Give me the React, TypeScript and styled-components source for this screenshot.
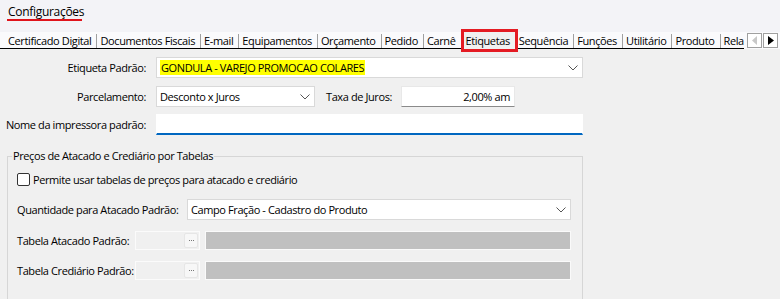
import React from "react";
import styled, { createGlobalStyle } from "styled-components";

const Global = createGlobalStyle`
  html, body { margin: 0; padding: 0; background: #f0f0f0; }
  body { font-family: "Open Sans", "Noto Sans", sans-serif; font-size: 11px; letter-spacing: -0.4px; color: #000; }
  * { box-sizing: border-box; }
`;

const Page = styled.div`
  width: 780px;
  height: 299px;
  overflow: hidden;
  background: #f0f0f0;
  display: flex;
  flex-direction: column;
  & > * { flex-shrink: 0; }
`;

const Header = styled.div`
  height: 32px;
  background: #f3f3f7;
  padding: 4px 0 0 8px;
`;

const Title = styled.span`
  display: inline-block;
  position: relative;
  font-size: 12px;
  line-height: 16px;
  letter-spacing: -0.3px;
  &::after {
    content: "";
    position: absolute;
    left: -1px;
    right: 2px;
    bottom: -1px;
    height: 2px;
    background: #e0141c;
  }
`;

const TabStrip = styled.div`
  height: 17px;
  display: flex;
  align-items: stretch;
  background: #fafafc;
`;

const Tabs = styled.div`
  flex: 1;
  min-width: 0;
  display: flex;
  border-bottom: 1px solid #000;
  padding-left: 5px;
  letter-spacing: -0.38px;
`;

const Tab = styled.div<{ $selected?: boolean; $first?: boolean; $last?: boolean }>`
  padding: 0 5px 0 3px;
  white-space: nowrap;
  border-left: ${(p) => (p.$first ? "none" : "1px solid #a0a0a0")};
  margin-top: 2px;
  height: 14px;
  line-height: 13px;
  flex-shrink: 0;
  ${(p) => (p.$last ? `flex: 1 1 auto; min-width: 0; overflow: hidden;` : "")}
  ${(p) =>
    p.$selected
      ? `outline: 3px solid #e41b23; outline-offset: 0; background:#f0f0f0; margin: 0 0 -1px 4px; height:17px; line-height:17px; border-left:none; padding: 0 5px 0 1px; position: relative; z-index: 2;`
      : ""}
`;

const Arrows = styled.div`
  display: flex;
  gap: 1px;
  padding: 1px 2px 0 3px;
`;

const ArrowBtn = styled.div`
  width: 15px;
  height: 15px;
  border: 1px solid #a0a0a0;
  background: #fff;
  display: flex;
  align-items: center;
  justify-content: center;
`;

const Content = styled.div`
  padding: 8px 0 0 0;
  display: flex;
  flex-direction: column;
`;

const Row = styled.div<{ $top?: number }>`
  display: flex;
  align-items: center;
  margin-top: ${(p) => p.$top ?? 0}px;
`;

const Label = styled.div<{ $w?: number; $left?: boolean }>`
  width: ${(p) => p.$w ?? 146}px;
  text-align: ${(p) => (p.$left ? "left" : "right")};
  white-space: nowrap;
  flex-shrink: 0;
`;

const Select = styled.div<{ $w: number; $h?: number; $ml?: number }>`
  width: ${(p) => p.$w}px;
  height: ${(p) => p.$h ?? 21}px;
  margin-left: ${(p) => p.$ml ?? 10}px;
  background: #fff;
  border: 1px solid #d9d9d9;
  display: flex;
  align-items: center;
  padding: 0 4px 0 3px;
  flex-shrink: 0;
`;

const SelectText = styled.div`
  flex: 1;
  white-space: nowrap;
  overflow: hidden;
`;

const Highlight = styled.span`
  background: #ffff00;
  padding: 2px 1px;
`;

const Input = styled.div<{ $w: number; $ml: number; $focus?: boolean }>`
  width: ${(p) => p.$w}px;
  height: 21px;
  margin-left: ${(p) => p.$ml}px;
  background: #fff;
  border: 1px solid ${(p) => (p.$focus ? "#fff" : "#e8e8e8")};
  border-bottom: ${(p) => (p.$focus ? "2px solid #0067c0" : "1px solid #8a8a8a")};
  display: flex;
  align-items: center;
  justify-content: flex-end;
  padding: 0 4px;
  flex-shrink: 0;
`;

const Group = styled.fieldset`
  margin: 14px 0 0 7px;
  width: 576px;
  border: 1px solid #d6d6d6;
  border-bottom: none;
  padding: 0 0 40px 9px;
`;

const Legend = styled.legend`
  padding: 0 1px;
  margin-left: -5px;
  line-height: 14px;
`;

const CheckRow = styled.label`
  display: flex;
  align-items: center;
  gap: 3px;
  margin-top: 9px;
`;

const Check = styled.span`
  width: 13px;
  height: 13px;
  border: 1px solid #333;
  border-radius: 2px;
  background: #fff;
`;

const Lookup = styled.div`
  width: 65px;
  height: 19px;
  border: 1px solid #fbfbfb;
  background: #f0f0f0;
  display: flex;
  justify-content: flex-end;
  align-items: center;
  padding-right: 1px;
  flex-shrink: 0;
`;

const Dots = styled.div`
  width: 14px;
  height: 15px;
  border-radius: 2px;
  background: #f7f7f7;
  border: 1px solid #e6e6e6;
  display: flex;
  align-items: center;
  justify-content: center;
  gap: 1px;
`;

const Dot = styled.span`
  width: 1px;
  height: 1px;
  background: #777;
`;

const GreyBar = styled.div`
  width: 366px;
  height: 19px;
  margin-left: 5px;
  background: #c0c0c0;
  border: 1px solid #fafafa;
  flex-shrink: 0;
`;

const Chevron = () => (
  <svg width="10" height="6" viewBox="0 0 10 6">
    <path d="M0.5 0.5 L5 5 L9.5 0.5" fill="none" stroke="#555" strokeWidth="1" />
  </svg>
);

const DotsButton = () => (
  <Dots>
    <Dot />
    <Dot />
    <Dot />
  </Dots>
);

const tabs = [
  "Certificado Digital",
  "Documentos Fiscais",
  "E-mail",
  "Equipamentos",
  "Orçamento",
  "Pedido",
  "Carnê",
  "Etiquetas",
  "Sequência",
  "Funções",
  "Utilitário",
  "Produto",
  "Rela",
];

export default function App() {
  return (
    <Page>
      <Global />
      <Header>
        <Title>Configurações</Title>
      </Header>
      <TabStrip>
        <Tabs>
          {tabs.map((t, i) => (
            <Tab
              key={t}
              $first={i === 0}
              $last={i === tabs.length - 1}
              $selected={t === "Etiquetas"}
            >
              {t}
            </Tab>
          ))}
        </Tabs>
        <Arrows>
          <ArrowBtn>
            <svg width="6" height="9" viewBox="0 0 6 9">
              <path d="M5 0 L0 4.5 L5 9 Z" fill="#c8c8c8" />
            </svg>
          </ArrowBtn>
          <ArrowBtn>
            <svg width="6" height="9" viewBox="0 0 6 9">
              <path d="M0 0 L6 4.5 L0 9 Z" fill="#000" />
            </svg>
          </ArrowBtn>
        </Arrows>
      </TabStrip>
      <Content>
        <Row>
          <Label>Etiqueta Padrão:</Label>
          <Select $w={427}>
            <SelectText>
              <Highlight>GONDULA - VAREJO PROMOCAO COLARES</Highlight>
            </SelectText>
            <Chevron />
          </Select>
        </Row>
        <Row $top={8}>
          <Label>Parcelamento:</Label>
          <Select $w={159}>
            <SelectText>Desconto x Juros</SelectText>
            <Chevron />
          </Select>
          <Label $w={77}>Taxa de Juros:</Label>
          <Input $w={114} $ml={9}>2,00% am</Input>
        </Row>
        <Row $top={7}>
          <Label>Nome da impressora padrão:</Label>
          <Input $w={427} $ml={10} $focus />
        </Row>
        <Group>
          <Legend>Preços de Atacado e Crediário por Tabelas</Legend>
          <CheckRow>
            <Check />
            Permite usar tabelas de preços para atacado e crediário
          </CheckRow>
          <Row $top={12}>
            <Label $w={165} $left>Quantidade para Atacado Padrão:</Label>
            <Select $w={384} $ml={5}>
              <SelectText>Campo Fração - Cadastro do Produto</SelectText>
              <Chevron />
            </Select>
          </Row>
          <Row $top={11}>
            <Label $w={118} $left>Tabela Atacado Padrão:</Label>
            <Lookup>
              <DotsButton />
            </Lookup>
            <GreyBar />
          </Row>
          <Row $top={11}>
            <Label $w={118} $left>Tabela Crediário Padrão:</Label>
            <Lookup>
              <DotsButton />
            </Lookup>
            <GreyBar />
          </Row>
        </Group>
      </Content>
    </Page>
  );
}
